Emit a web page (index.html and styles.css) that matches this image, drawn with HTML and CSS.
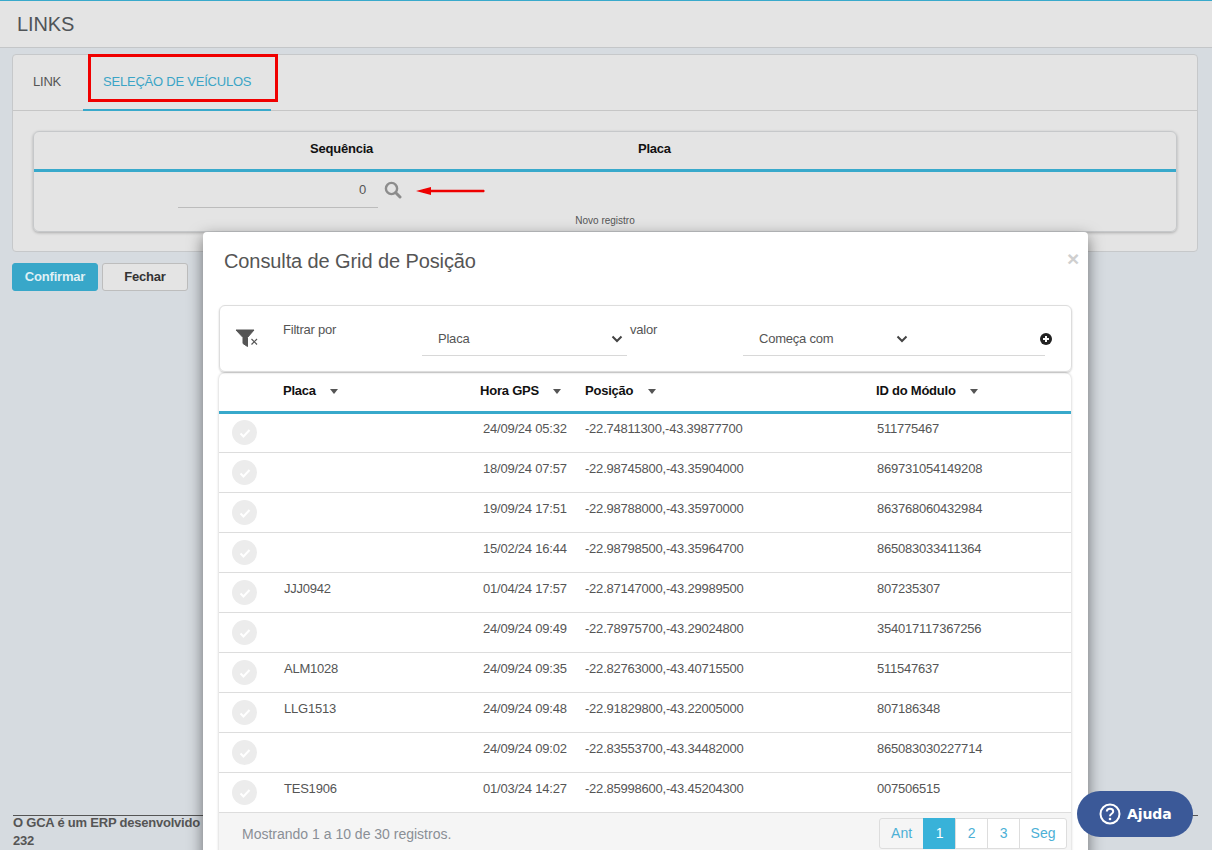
FILE: index.html
```html
<!DOCTYPE html>
<html lang="pt-BR">
<head>
    <meta charset="UTF-8">
    <title>Links</title>
    <link rel="stylesheet" href="styles.css">
</head>
<body>
    <div class="page">
        <div class="page-title">LINKS</div>

        <div class="content">
            <div class="card">
                <div class="tabs">
                    <div class="tab">LINK</div>
                    <div class="tab tab-active">SELEÇÃO DE VEÍCULOS</div>
                </div>
                <div class="card-body">
                    <div class="seq-table">
                        <div class="seq-head">
                            <span class="seq-col-seq">Sequência</span>
                            <span class="seq-col-placa">Placa</span>
                        </div>
                        <div class="seq-row">
                            <div class="seq-input">0</div>
                            <svg class="seq-search" width="18" height="18" viewBox="0 0 18 18">
                                <circle cx="7.5" cy="7.5" r="5.6" fill="none" stroke="#8c8c8c" stroke-width="2.4"/>
                                <path d="M11.8 11.8 L16 16" stroke="#8c8c8c" stroke-width="3" stroke-linecap="round"/>
                            </svg>
                            <svg class="seq-arrow" width="70" height="10" viewBox="0 0 70 10">
                                <path d="M0 5 L15 1 L15 3.8 L68 3.8 Q69.5 5 68 6.2 L15 6.2 L15 9 Z" fill="#ee0000"/>
                            </svg>
                        </div>
                        <div class="seq-new">Novo registro</div>
                    </div>
                </div>
            </div>

            <div class="actions">
                <button class="btn btn-primary">Confirmar</button>
                <button class="btn">Fechar</button>
            </div>
        </div>

        <div class="footer">
            <div class="footer-line">O GCA é um ERP desenvolvido</div>
            <div>232</div>
        </div>
    </div>

    <div class="modal">
        <div class="modal-head">
            <div class="modal-title">Consulta de Grid de Posição</div>
            <div class="modal-close">×</div>
        </div>

        <div class="filter">
            <svg class="filter-icon" width="26" height="22" viewBox="0 0 26 22">
                <path d="M1 2 H19 L12.500 9.500 V18.500 L8 15.500 V9.500 Z" fill="#555" stroke="#555" stroke-linejoin="round"/>
                <path d="M16.500 11 L22 16.500 M22 11 L16.500 16.500" stroke="#555" stroke-width="1.200"/>
            </svg>
            <div class="filter-label filter-label-por">Filtrar por</div>
            <div class="filter-select filter-select-placa">
                <span>Placa</span>
                <svg width="12" height="8" viewBox="0 0 12 8"><path d="M1.500 1.500 L6 6 L10.500 1.500" fill="none" stroke="#444" stroke-width="2"/></svg>
            </div>
            <div class="filter-label filter-label-valor">valor</div>
            <div class="filter-select filter-select-op">
                <span>Começa com</span>
                <svg width="12" height="8" viewBox="0 0 12 8"><path d="M1.500 1.500 L6 6 L10.500 1.500" fill="none" stroke="#444" stroke-width="2"/></svg>
            </div>
            <svg class="filter-add" width="12" height="12" viewBox="0 0 12 12">
                <circle cx="6" cy="6" r="6" fill="#222"/>
                <path d="M6 3 V9 M3 6 H9" stroke="#fff" stroke-width="2"/>
            </svg>
        </div>

        <div class="grid">
            <div class="grid-head">
                <span></span>
                <span class="grid-th">Placa <i class="caret"></i></span>
                <span class="grid-th">Hora GPS <i class="caret"></i></span>
                <span class="grid-th">Posição <i class="caret"></i></span>
                <span class="grid-th">ID do Módulo <i class="caret"></i></span>
            </div>
            <div id="rows" class="grid-rows"></div>
            <div class="grid-foot">
                <span class="grid-info">Mostrando 1 a 10 de 30 registros.</span>
                <div class="pager">
                    <span class="pager-item pager-off">Ant</span>
                    <span class="pager-item pager-on">1</span>
                    <span class="pager-item">2</span>
                    <span class="pager-item">3</span>
                    <span class="pager-item pager-next">Seg</span>
                </div>
            </div>
        </div>
    </div>

    <div class="help">
        <svg width="22" height="22" viewBox="0 0 22 22">
            <circle cx="11" cy="11" r="9.500" fill="none" stroke="#fff" stroke-width="2"/>
            <path d="M7.800 8.500 C8 4.800 14.200 5 14.200 8.500 C14.200 10.800 11 10.800 11 13.200" fill="none" stroke="#fff" stroke-width="2"/>
            <circle cx="11" cy="16" r="1.300" fill="#fff"/>
        </svg>
        <span>Ajuda</span>
    </div>

    <script src="rows.js"></script>
</body>
</html>
```

FILE: rows.js
```js
// linhas da consulta
const rows = [
    ['', '24/09/24 05:32', '-22.74811300,-43.39877700', '511775467'],
    ['', '18/09/24 07:57', '-22.98745800,-43.35904000', '869731054149208'],
    ['', '19/09/24 17:51', '-22.98788000,-43.35970000', '863768060432984'],
    ['', '15/02/24 16:44', '-22.98798500,-43.35964700', '865083033411364'],
    ['JJJ0942', '01/04/24 17:57', '-22.87147000,-43.29989500', '807235307'],
    ['', '24/09/24 09:49', '-22.78975700,-43.29024800', '354017117367256'],
    ['ALM1028', '24/09/24 09:35', '-22.82763000,-43.40715500', '511547637'],
    ['LLG1513', '24/09/24 09:48', '-22.91829800,-43.22005000', '807186348'],
    ['', '24/09/24 09:02', '-22.83553700,-43.34482000', '865083030227714'],
    ['TES1906', '01/03/24 14:27', '-22.85998600,-43.45204300', '007506515']
];

const check = '<svg width="14" height="14" viewBox="0 0 14 14"><path d="M2.500 7.500 L5.500 10.500 L11.500 4" fill="none" stroke="#fff" stroke-width="2"/></svg>';

document.getElementById('rows').innerHTML = rows.map(function (r) {
    return '<div class="grid-row">' +
        '<span class="grid-check">' + check + '</span>' +
        '<span class="cell-placa">' + r[0] + '</span>' +
        '<span class="cell-hora">' + r[1] + '</span>' +
        '<span>' + r[2] + '</span>' +
        '<span class="cell-id">' + r[3] + '</span>' +
        '</div>';
}).join('');
```

FILE: styles.css
```css
html, body {
    margin: 0;
    height: 850px;
    overflow: hidden;
}

body {
    position: relative;
    font-family: "Liberation Sans", Arial, sans-serif;
    font-size: 13px;
    letter-spacing: -0.22px;
    color: #555;
    background: #d6dbe0;
}

.page {
    height: 850px;
    display: flex;
    flex-direction: column;
    box-sizing: border-box;
    border-top: 1px solid #38a9cb;
}

.page-title {
    height: 47px;
    box-sizing: border-box;
    padding: 12px 17px 0;
    font-size: 20px;
    letter-spacing: -0.1px;
    line-height: 23px;
    color: #505458;
    background: #e4e4e4;
    border-bottom: 1px solid #c4c6c8;
}

.content {
    padding: 6px 14px 0 12px;
}

.card {
    background: #e4e4e4;
    border: 1px solid #c6c8ca;
    border-radius: 4px;
    height: 198px;
    box-sizing: border-box;
}

.tabs {
    display: flex;
    height: 56px;
    box-sizing: border-box;
    border-bottom: 1px solid #c6c6c6;
}

.tab {
    padding: 19px 22px 0 20px;
    line-height: 16px;
    color: #555;
}

.tab-active {
    padding-right: 20px;
    color: #3ba4c6;
    position: relative;
}

.tab-active::before {
    content: "";
    position: absolute;
    left: 0;
    right: 0;
    bottom: -1px;
    height: 2px;
    background: #38a9cb;
}

.tab-active::after {
    content: "";
    position: absolute;
    left: 5px;
    top: -1px;
    width: 190px;
    height: 48px;
    box-sizing: border-box;
    border: 3px solid #f00000;
}

.card-body {
    padding: 20px 20px 0;
}

.seq-table {
    height: 101px;
    box-sizing: border-box;
    border: 1px solid #c6c8ca;
    border-radius: 6px;
    box-shadow: 0 1px 3px rgba(0, 0, 0, 0.25);
}

.seq-head {
    position: relative;
    height: 40px;
    box-sizing: border-box;
    border-bottom: 3px solid #38a9cb;
    font-weight: bold;
    line-height: 34px;
    color: #111;
}

.seq-col-seq {
    position: absolute;
    left: 276px;
}

.seq-col-placa {
    position: absolute;
    left: 604px;
}

.seq-row {
    display: flex;
    align-items: flex-start;
    padding: 9px 0 0 144px;
    height: 36px;
}

.seq-input {
    width: 200px;
    height: 27px;
    box-sizing: border-box;
    padding: 1px 12px 0 0;
    border-bottom: 1px solid #bcbcbc;
    text-align: right;
    line-height: 16px;
}

.seq-search {
    margin-left: 6px;
}

.seq-arrow {
    margin: 5px 0 0 14px;
}

.seq-new {
    margin-top: -2px;
    text-align: center;
    font-size: 10px;
    letter-spacing: 0;
    line-height: 11px;
    color: #555;
}

.actions {
    display: flex;
    gap: 4px;
    margin-top: 11px;
}

.btn {
    width: 86px;
    height: 28px;
    padding: 0 0 2px;
    font-family: inherit;
    font-size: 13px;
    letter-spacing: -0.2px;
    font-weight: bold;
    color: #333;
    background: #e4e4e4;
    border: 1px solid #bdbdbd;
    border-radius: 3px;
}

.btn-primary {
    color: #dff0f5;
    background: #38a7c9;
    border-color: #38a7c9;
}

.footer {
    margin: auto 14px 0 13px;
    border-top: 1px solid #555;
    font-weight: bold;
    line-height: 18px;
    color: #555;
}

.footer-line {
    margin-top: -2px;
}

/* modal por cima da pagina */
.modal {
    position: absolute;
    left: 203px;
    top: 232px;
    width: 885px;
    height: 640px;
    box-sizing: border-box;
    padding: 0 16px;
    background: #fff;
    border-radius: 4px 4px 0 0;
    box-shadow: 0 5px 15px rgba(0, 0, 0, 0.5);
}

.modal-head {
    position: relative;
    height: 73px;
}

.modal-title {
    padding: 17px 0 0 5px;
    font-size: 20px;
    letter-spacing: -0.1px;
    line-height: 24px;
    color: #555;
}

.modal-close {
    position: absolute;
    right: -7px;
    top: 16px;
    font-size: 21px;
    font-weight: bold;
    line-height: 21px;
    color: #cfcfcf;
}

.filter {
    position: relative;
    height: 67px;
    box-sizing: border-box;
    border: 1px solid #ddd;
    border-radius: 6px;
    box-shadow: 0 1px 2px rgba(0, 0, 0, 0.2);
}

.filter-icon {
    position: absolute;
    left: 15px;
    top: 22px;
}

.filter-label {
    position: absolute;
    top: 16px;
    line-height: 16px;
}

.filter-label-por {
    left: 63px;
}

.filter-label-valor {
    left: 410px;
}

.filter-select {
    position: absolute;
    top: 21px;
    height: 29px;
    box-sizing: border-box;
    display: flex;
    align-items: center;
    justify-content: space-between;
    padding: 0 4px 5px 16px;
    border-bottom: 1px solid #d8d8d8;
}

.filter-select-placa {
    left: 202px;
    width: 205px;
}

.filter-select-op {
    left: 523px;
    width: 302px;
    padding-right: 137px;
}

.filter-add {
    position: absolute;
    left: 820px;
    top: 27px;
}

.grid {
    margin-top: 1px;
    margin-right: 1px;
    border-radius: 6px 6px 0 0;
    box-shadow: 0 0 3px rgba(0, 0, 0, 0.25);
}

.grid-head, .grid-row {
    display: grid;
    grid-template-columns: 64px 197px 105px 291px 1fr;
    box-sizing: border-box;
}

.grid-head {
    height: 41px;
    border-bottom: 3px solid #38a9cb;
    line-height: 35px;
}

.grid-rows {
    margin-top: -1px;
}

.grid-th {
    font-weight: bold;
    color: #111;
}

.caret {
    display: inline-block;
    margin-left: 11px;
    vertical-align: middle;
    border-top: 5px solid #555;
    border-left: 4.500px solid transparent;
    border-right: 4.500px solid transparent;
}

.grid-row {
    height: 40px;
    border-bottom: 1px solid #ddd;
    padding-top: 7px;
    line-height: 17px;
}

.grid-check {
    display: flex;
    align-items: center;
    justify-content: center;
    width: 25px;
    height: 25px;
    margin: 0 0 0 13px;
    border-radius: 50%;
    background: #ececec;
}

.cell-placa {
    padding-left: 1px;
}

.cell-hora {
    padding-left: 3px;
}

.cell-id {
    padding-left: 1px;
}

.grid-foot {
    display: flex;
    justify-content: space-between;
    height: 60px;
    padding: 5px 4px 0 23px;
    background: #f5f5f5;
}

.grid-info {
    padding-top: 7px;
    font-size: 14px;
    letter-spacing: 0;
    line-height: 18px;
    color: #8a8f96;
}

.pager {
    display: flex;
    height: 31px;
    font-size: 14px;
    letter-spacing: 0;
    line-height: 29px;
    color: #4cb0d6;
}

.pager-item {
    padding: 0 10px;
    min-width: 11px;
    text-align: center;
    background: #fff;
    border: 1px solid #ddd;
    margin-left: -1px;
}

.pager-off {
    padding: 0 11px;
    background: #f5f5f5;
    border-radius: 3px 0 0 3px;
}

.pager-next {
    padding: 0 10.500px;
    border-radius: 0 3px 3px 0;
}

.pager-on {
    color: #fff;
    background: #38b2d9;
    border-color: #38b2d9;
}

.help {
    position: absolute;
    left: 1077px;
    top: 791px;
    width: 116px;
    height: 46px;
    box-sizing: border-box;
    display: flex;
    align-items: center;
    gap: 6px;
    padding-left: 22px;
    border-radius: 23px;
    background: #3b5998;
    color: #fff;
    font-family: "DejaVu Sans", sans-serif;
    font-size: 14px;
    letter-spacing: -0.1px;
    font-weight: bold;
}
```
